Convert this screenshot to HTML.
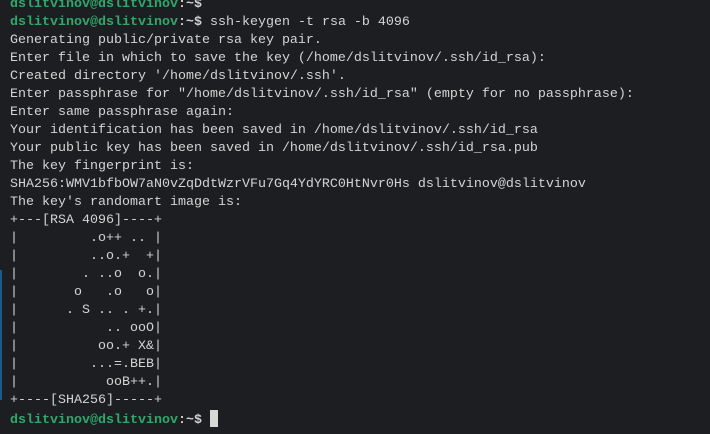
<!DOCTYPE html>
<html><head><meta charset="utf-8"><style>
html,body{margin:0;padding:0;background:#1d1e21;width:710px;height:434px;overflow:hidden}
pre{margin:0;position:absolute;left:10px;top:-4px;font-family:"Liberation Mono",monospace;font-size:13.33px;line-height:18px;color:#d4d4d4}
.g{color:#2fa86c;font-weight:bold}
.w{color:#d2d2d2;font-weight:bold}
.c{display:inline-block;width:8px;height:17px;background:#d8d8d8;vertical-align:-4px}
.b{position:absolute;left:0;top:270px;width:2px;height:130px;background:#1a5a8a}
</style></head><body><div class="b"></div><pre><span class="g">dslitvinov@dslitvinov</span><span class="w">:~$</span>
<span class="g">dslitvinov@dslitvinov</span><span class="w">:~$</span> ssh-keygen -t rsa -b 4096
Generating public/private rsa key pair.
Enter file in which to save the key (/home/dslitvinov/.ssh/id_rsa):
Created directory '/home/dslitvinov/.ssh'.
Enter passphrase for "/home/dslitvinov/.ssh/id_rsa" (empty for no passphrase):
Enter same passphrase again:
Your identification has been saved in /home/dslitvinov/.ssh/id_rsa
Your public key has been saved in /home/dslitvinov/.ssh/id_rsa.pub
The key fingerprint is:
SHA256:WMV1bfbOW7aN0vZqDdtWzrVFu7Gq4YdYRC0HtNvr0Hs dslitvinov@dslitvinov
The key's randomart image is:
+---[RSA 4096]----+
|         .o++ .. |
|         ..o.+  +|
|        . ..o  o.|
|       o   .o   o|
|      . S .. . +.|
|           .. ooO|
|          oo.+ X&|
|         ...=.BEB|
|           ooB++.|
+----[SHA256]-----+
<span class="g">dslitvinov@dslitvinov</span><span class="w">:~$</span> <span class="c"></span></pre></body></html>
